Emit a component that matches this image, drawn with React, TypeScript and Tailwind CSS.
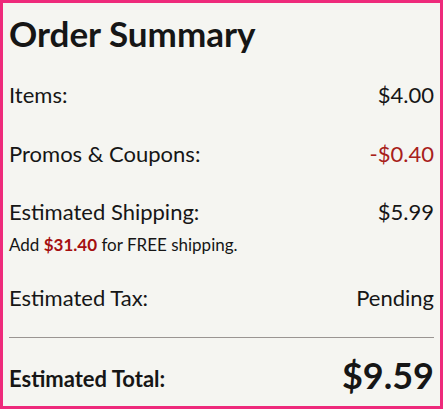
import React from "react";

export default function App() {
  return (
    <div className="w-[443px] h-[409px] border-[3px] border-[#ee2a7b] bg-[#f5f5f1] px-[6px] text-[#161616]" style={{ fontFamily: "Lato, 'Liberation Sans', sans-serif" }}>
      <h1 className="text-[35px] font-bold leading-none mt-[13px]">Order Summary</h1>
      <div className="flex justify-between text-[22px] leading-none mt-[33px]">
        <span>Items:</span>
        <span>$4.00</span>
      </div>
      <div className="flex justify-between text-[22px] leading-none mt-[37px]">
        <span>Promos &amp; Coupons:</span>
        <span className="text-[#a8201a]">-$0.40</span>
      </div>
      <div className="flex justify-between text-[22px] leading-none mt-[36px]">
        <span>Estimated Shipping:</span>
        <span>$5.99</span>
      </div>
      <div className="text-[17px] leading-none mt-[13px]">
        Add <span className="font-bold text-[#a50f0f]">$31.40</span> for FREE shipping.
      </div>
      <div className="flex justify-between text-[22px] leading-none mt-[34px]">
        <span>Estimated Tax:</span>
        <span>Pending</span>
      </div>
      <div className="h-px bg-[#9a9592] mt-[28px]" />
      <div className="flex justify-between items-end mt-[19px]">
        <span className="text-[22px] font-bold leading-none mb-[3px]">Estimated Total:</span>
        <span className="text-[36px] font-bold leading-none">$9.59</span>
      </div>
    </div>
  );
}
